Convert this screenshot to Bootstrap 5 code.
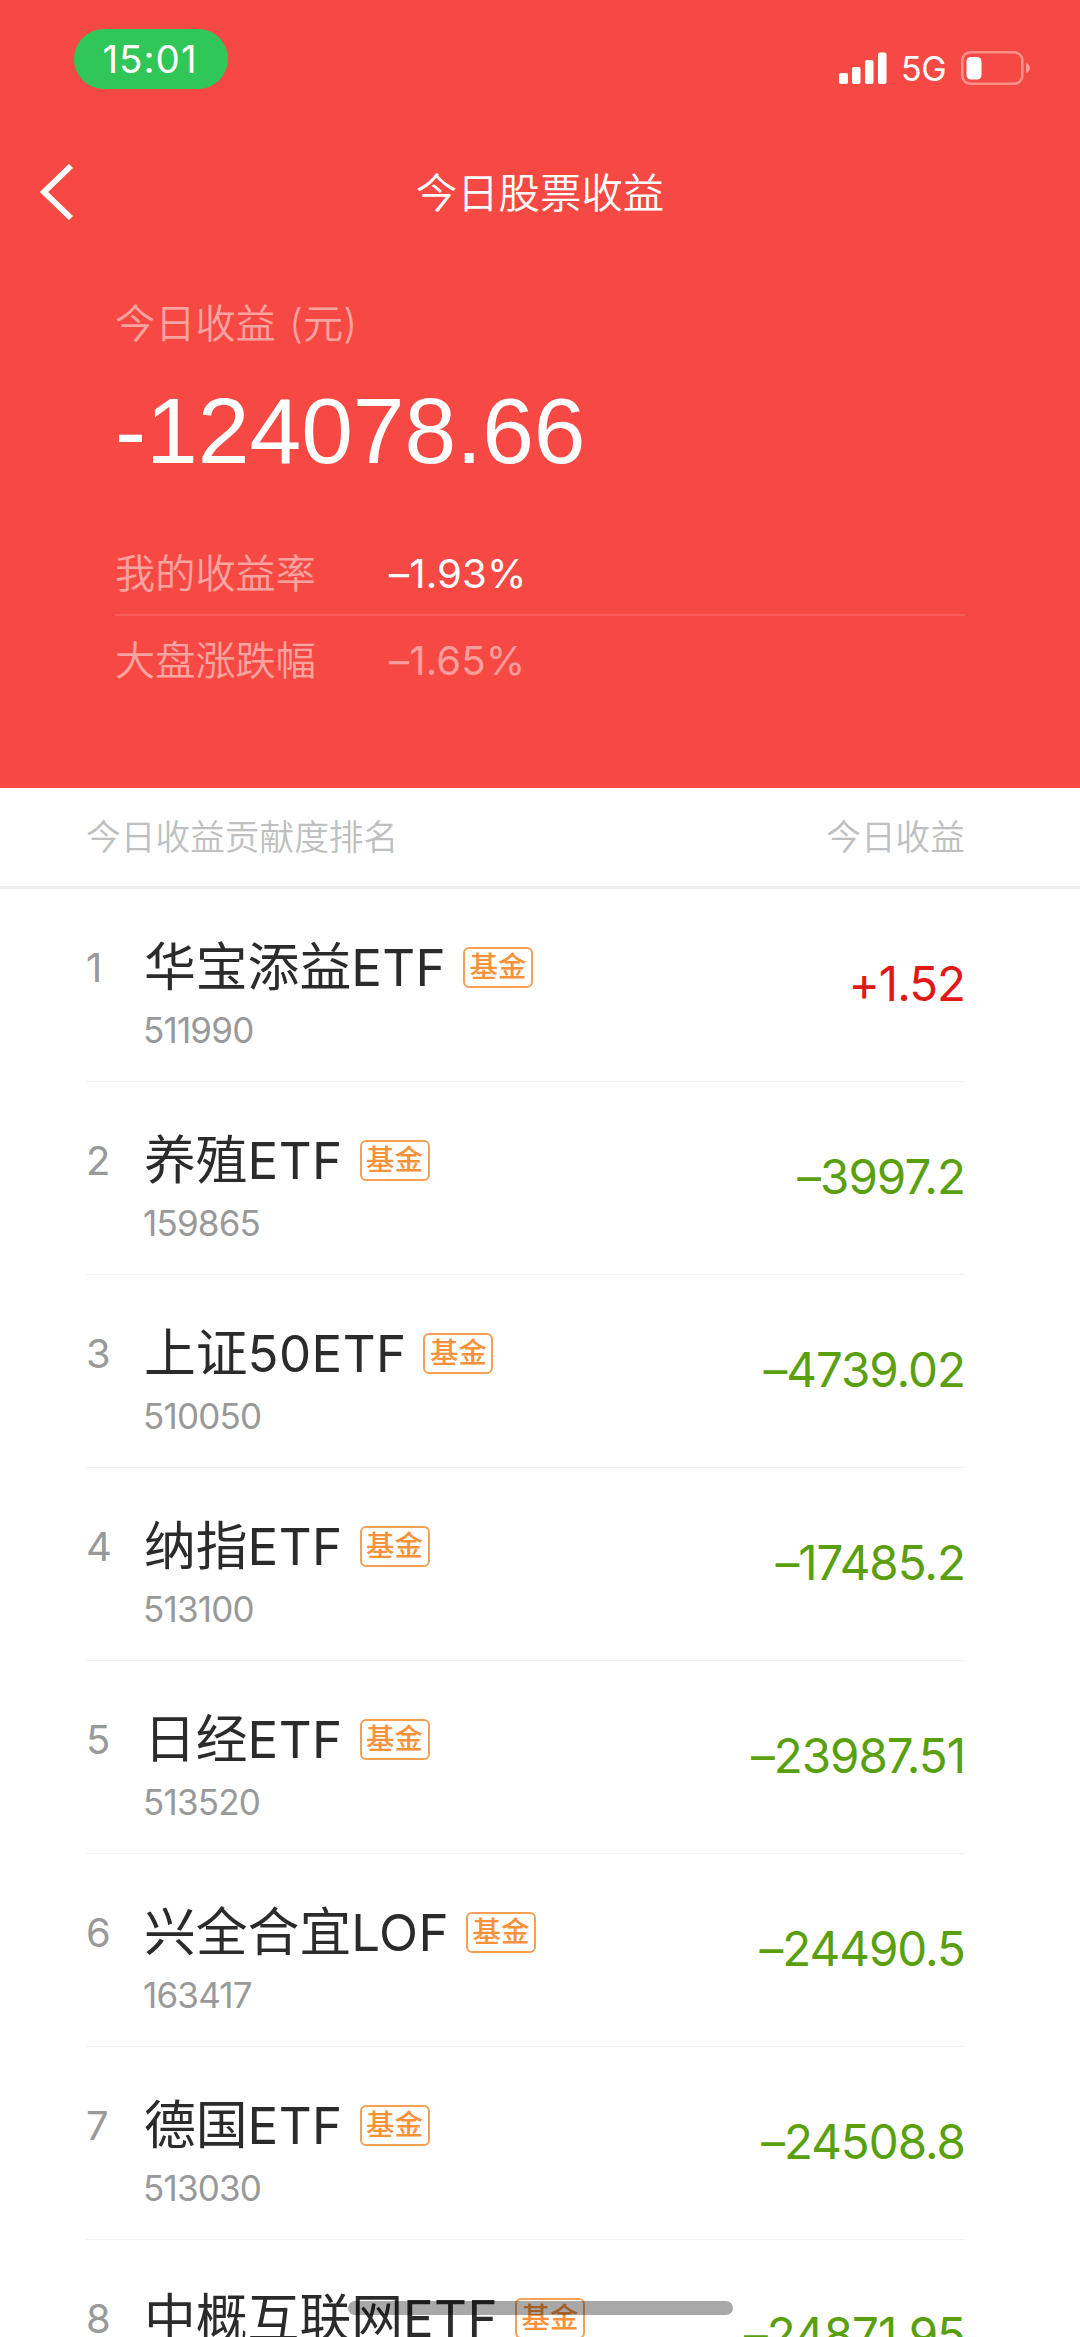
<!DOCTYPE html>
<html lang="zh-CN">
<head>
<meta charset="utf-8">
<meta name="viewport" content="width=device-width, initial-scale=1">
<title>今日股票收益</title>
<link href="https://cdn.jsdelivr.net/npm/bootstrap@5.3.0/dist/css/bootstrap.min.css" rel="stylesheet">
<style>
html,body{height:2337px;overflow:hidden}
body{font-family:Inter,"Noto Sans CJK SC",sans-serif;font-weight:400;background:#fff;width:1080px}
.screen{height:2337px}
.hero{background:#f64944;height:788px}
.statusbar{height:118px;padding:29px 49px 0 74px}
.clock{width:154px;height:60px;border-radius:30px;background:#31c658;font-size:38.5px;line-height:61px;padding-right:2px;letter-spacing:1px}
.signals{padding-top:22px}
.net{font-size:34px;line-height:36px;margin-left:14px;width:46px;letter-spacing:-.4px}
.signals .cell-bars{margin-top:1px}
.batt{margin-left:14px}
.titlebar{height:148px;padding:0 40px}
.titlebar h1{font-size:41.4px;font-weight:350;line-height:60px;padding-top:2px}
.titlebar .side{width:34px}
.summary{padding:29px 115px 0}
.label{font-size:40.2px;font-weight:350;line-height:58px;color:rgba(255,255,255,.5);word-spacing:2px}
.total{font-family:"Liberation Sans",sans-serif;font-size:93px;line-height:100px;margin-top:28px}
.rates{margin-top:63px}
.rate{height:70px;font-size:40.2px;line-height:60px;letter-spacing:.1px}
.rate .label{width:274px;letter-spacing:0;line-height:60px}
.rate+.rate{border-top:2px solid rgba(255,255,255,.12);padding-top:15px;height:87px}
.muted{color:rgba(255,255,255,.47)}
.listhead{height:101px;padding:0 115px 0 86px;border-bottom:3px solid #eee;font-size:34.7px;font-weight:350;color:#bfbfbf}
.ranking{padding:0 115px 0 86px}
.stock{height:193px;border-bottom:1.5px solid #f2f2f2}
.rank{width:57px;font-size:40px;line-height:60px;color:#999;padding-top:49px}
.stock-name{font-size:51.8px;line-height:60px;color:#2b2b2b;padding-left:1px}
.lat{font-size:51px;letter-spacing:.4px}
.fund-tag{font-size:28.5px;font-weight:500;line-height:36px;color:#f7923b;border:2px solid #f7a055;border-radius:6px;width:70px;height:41px;margin-left:17px;text-align:center}
.code{font-size:35px;line-height:44px;color:#999;letter-spacing:-.8px;margin-top:10px}
.info{padding-top:48px}
.amount{font-size:47.5px;line-height:60px;letter-spacing:-1px;padding-top:65px}
.up{color:#e01818}.down{color:#5aa00e}
.home-bar{left:348px;top:2301px;width:385px;height:14px;border-radius:7px;background:rgba(0,0,0,.34)}
</style>
</head>
<body>
<div class="screen position-relative overflow-hidden">
<header class="hero text-white">
  <div class="statusbar d-flex justify-content-between align-items-start">
    <div class="clock text-center">15:01</div>
    <div class="signals d-flex align-items-start">
      <svg class="cell-bars" width="48" height="32" viewBox="0 0 48 32" fill="#fff"><rect x="0" y="21" width="9" height="11" rx="2"/><rect x="13" y="15" width="8.5" height="17" rx="2"/><rect x="26" y="8" width="8.5" height="24" rx="2"/><rect x="39" y="0.5" width="8.5" height="31.5" rx="2"/></svg>
      <span class="net">5G</span>
      <svg class="batt" width="70" height="34" viewBox="0 0 70 34"><rect x="1.3" y="1.3" width="60" height="31.4" rx="8" fill="none" stroke="#fff" stroke-opacity=".4" stroke-width="2.5"/><rect x="5.5" y="6" width="15" height="22.5" rx="4.5" fill="#fff"/><path d="M65 12q4 1.500 4 5t-4 5z" fill="#fff" fill-opacity=".45"/></svg>
    </div>
  </div>
  <div class="titlebar d-flex align-items-center justify-content-between">
    <svg class="side" width="34" height="56" viewBox="0 0 34 56"><path d="M31 2 4 28l27 26" fill="none" stroke="#fff" stroke-width="5.800"/></svg>
    <h1 class="m-0">今日股票收益</h1>
    <span class="side"></span>
  </div>
  <div class="summary">
    <div class="label">今日收益 (元)</div>
    <div class="total">-124078.66</div>
    <div class="rates">
      <div class="rate d-flex"><span class="label">我的收益率</span><span>–1.93%</span></div>
      <div class="rate d-flex"><span class="label">大盘涨跌幅</span><span class="muted">–1.65%</span></div>
    </div>
  </div>
</header>
<div class="listhead d-flex align-items-center justify-content-between"><span>今日收益贡献度排名</span><span>今日收益</span></div>
<main class="ranking">
  <div class="stock d-flex"><div class="rank">1</div><div class="info flex-grow-1"><div class="d-flex align-items-center"><span class="stock-name">华宝添益<span class="lat">ETF</span></span><span class="fund-tag">基金</span></div><div class="code">511990</div></div><div class="amount up">+1.52</div></div>
  <div class="stock d-flex"><div class="rank">2</div><div class="info flex-grow-1"><div class="d-flex align-items-center"><span class="stock-name">养殖<span class="lat">ETF</span></span><span class="fund-tag">基金</span></div><div class="code">159865</div></div><div class="amount down">–3997.2</div></div>
  <div class="stock d-flex"><div class="rank">3</div><div class="info flex-grow-1"><div class="d-flex align-items-center"><span class="stock-name">上证<span class="lat">50ETF</span></span><span class="fund-tag">基金</span></div><div class="code">510050</div></div><div class="amount down">–4739.02</div></div>
  <div class="stock d-flex"><div class="rank">4</div><div class="info flex-grow-1"><div class="d-flex align-items-center"><span class="stock-name">纳指<span class="lat">ETF</span></span><span class="fund-tag">基金</span></div><div class="code">513100</div></div><div class="amount down">–17485.2</div></div>
  <div class="stock d-flex"><div class="rank">5</div><div class="info flex-grow-1"><div class="d-flex align-items-center"><span class="stock-name">日经<span class="lat">ETF</span></span><span class="fund-tag">基金</span></div><div class="code">513520</div></div><div class="amount down">–23987.51</div></div>
  <div class="stock d-flex"><div class="rank">6</div><div class="info flex-grow-1"><div class="d-flex align-items-center"><span class="stock-name">兴全合宜<span class="lat">LOF</span></span><span class="fund-tag">基金</span></div><div class="code">163417</div></div><div class="amount down">–24490.5</div></div>
  <div class="stock d-flex"><div class="rank">7</div><div class="info flex-grow-1"><div class="d-flex align-items-center"><span class="stock-name">德国<span class="lat">ETF</span></span><span class="fund-tag">基金</span></div><div class="code">513030</div></div><div class="amount down">–24508.8</div></div>
  <div class="stock d-flex"><div class="rank">8</div><div class="info flex-grow-1"><div class="d-flex align-items-center"><span class="stock-name">中概互联网<span class="lat">ETF</span></span><span class="fund-tag">基金</span></div></div><div class="amount down">–24871.95</div></div>
</main>
<div class="home-bar position-absolute"></div>
</div>
<script src="https://cdn.jsdelivr.net/npm/bootstrap@5.3.0/dist/js/bootstrap.bundle.min.js"></script>
</body>
</html>
